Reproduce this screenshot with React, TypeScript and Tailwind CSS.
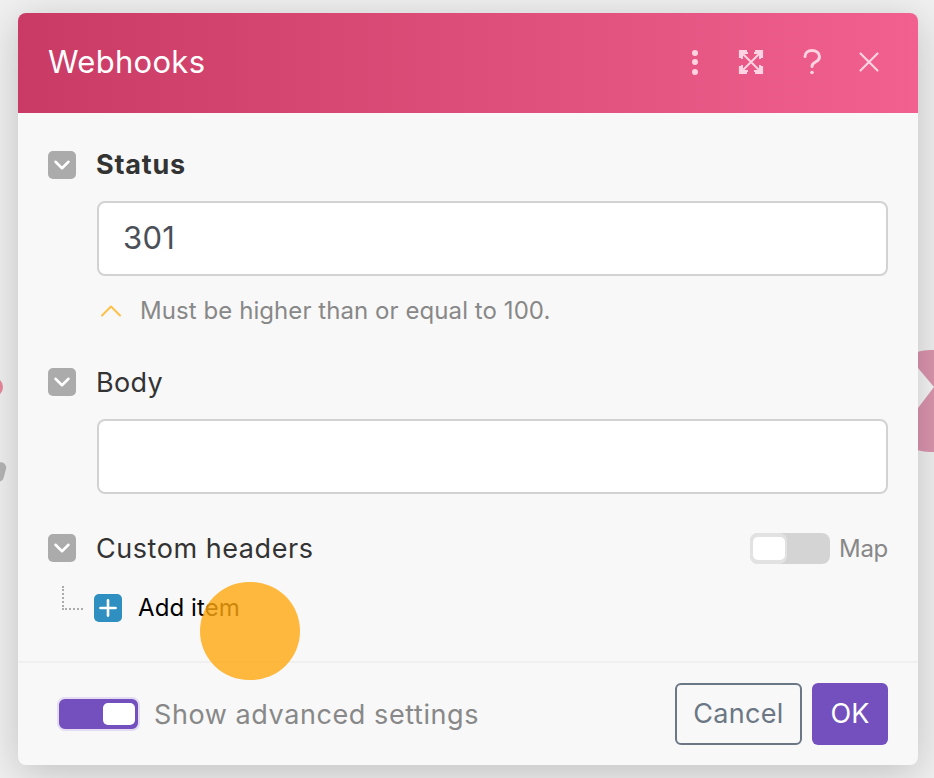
import React from 'react';
import { ChevronDown, ChevronUp, Plus, X } from 'lucide-react';

const Collapse: React.FC = () => (
  <div className="w-7 h-7 shrink-0 rounded-[5px] bg-[#ababab] flex items-center justify-center">
    <ChevronDown size={26} strokeWidth={2.3} className="text-white" />
  </div>
);

const ExpandIcon: React.FC = () => (
  <svg width="26" height="26" viewBox="0 0 26 26" fill="none" stroke="currentColor" strokeWidth="2">
    <path d="M9 2H2v7M17 2h7v7M9 24H2v-7M17 24h7v-7" strokeWidth="2.2" />
    <path d="M4 4l18 18M22 4L4 22" />
    <path d="M4 10V4h6M22 10V4h-6M4 16v6h6M22 16v6h-6" />
  </svg>
);

const HelpIcon: React.FC = () => (
  <svg width="18" height="26" viewBox="0 0 18 26" fill="none" stroke="currentColor" strokeWidth="3" strokeLinecap="round">
    <path d="M2 7.5C2 4 5 1.5 9 1.5s7.5 2.5 7.5 6c0 3-2 4.5-4 5.5-2 1-3.5 2-3.5 4.5" />
    <circle cx="9" cy="23.5" r="1.8" fill="currentColor" stroke="none" />
  </svg>
);

export default function App() {
  return (
    <div className="relative w-[934px] h-[778px] overflow-hidden bg-[#f0f0f0] pt-[13px] pl-[18px] font-['Inter',sans-serif]">
      {/* canvas behind the dialog */}
      <div className="absolute left-[-21px] top-[377px] w-[24px] h-[20px] rounded-full bg-[#e8889c]" />
      <div className="absolute left-[-6px] top-[462px] w-[11px] h-[20px] rounded-full rotate-[15deg] bg-[#b5b5b5]" />
      <div className="absolute left-[880px] top-[350px] w-[110px] h-[102px] rounded-full bg-[#db95ae]" />
      <svg className="absolute left-[918px] top-[368px]" width="16" height="40" viewBox="0 0 16 40">
        <path d="M0 0L16 19L0 40Z" fill="#f6f6f6" />
      </svg>

      <div className="relative w-[900px] h-[752px] rounded-lg overflow-hidden bg-[#f8f8f8] shadow-[0_8px_40px_rgba(0,0,0,0.2)] flex flex-col">
        <div className="h-[100px] shrink-0 bg-gradient-to-r from-[#c93a64] to-[#f1608f] flex items-center pl-[30px] pr-[40px]">
          <span className="text-[31px] leading-none tracking-[0.3px] text-white -mt-[3px]">Webhooks</span>
          <div className="ml-auto flex items-center text-[#ffd3e1] -mt-[2px]">
            <div className="flex flex-col gap-[3.5px] mr-[40px]">
              <div className="w-[6px] h-[6px] rounded-full bg-[#ffd3e1]" />
              <div className="w-[6px] h-[6px] rounded-full bg-[#ffd3e1]" />
              <div className="w-[6px] h-[6px] rounded-full bg-[#ffd3e1]" />
            </div>
            <ExpandIcon />
            <div className="ml-[39px] mr-[39px]">
              <HelpIcon />
            </div>
            <div className="w-[18px] h-[18px] flex items-center justify-center">
              <X size={34} strokeWidth={1.5} className="shrink-0" />
            </div>
          </div>
        </div>

        <div className="flex-1 pl-[30px] pr-[30px] pt-[38px]">
          <div className="flex items-center gap-[20px] h-7">
            <Collapse />
            <span className="text-[27px] leading-7 font-bold tracking-[0.8px] text-[#333333]">Status</span>
          </div>
          <div className="ml-[49px] mt-[22px] h-[75px] rounded-lg border-2 border-[#d2d2d2] bg-white flex items-center px-[24px] text-[31px] tracking-[0.3px] text-[#4b5058]">
            301
          </div>
          <div className="ml-[49px] mt-[20px] flex items-center h-[30px]">
            <div className="w-[28px] flex items-center justify-center">
              <ChevronUp size={36} strokeWidth={1.4} className="text-[#fdc14b] shrink-0" />
            </div>
            <span className="ml-[15px] text-[24px] tracking-[0.07px] text-[#888888]">Must be higher than or equal to 100.</span>
          </div>
          <div className="flex items-center gap-[20px] h-7 mt-[42px]">
            <Collapse />
            <span className="text-[27px] leading-7 tracking-[0.3px] text-[#333333] mt-[1px]">Body</span>
          </div>
          <div className="ml-[49px] mt-[23px] h-[75px] rounded-lg border-2 border-[#d2d2d2] bg-white" />
          <div className="flex items-center gap-[20px] h-7 mt-[40px]">
            <Collapse />
            <span className="text-[27px] leading-7 tracking-[0.55px] text-[#333333] mt-[1px]">Custom headers</span>
            <div className="ml-auto flex items-center gap-[9px]">
              <div className="w-[80px] h-[31px] rounded-lg bg-[#d4d4d4] flex items-center">
                <div className="w-[37px] h-[31px] rounded-lg bg-[#e2e2e2] flex items-center justify-center">
                  <div className="w-[32px] h-[23px] rounded-[5px] bg-white" />
                </div>
              </div>
              <span className="text-[24px] leading-7 tracking-[-0.3px] text-[#888888] mt-[2px]">Map</span>
            </div>
          </div>
          <div className="flex items-start mt-[24px] ml-[14px]">
            <div className="w-[21px] h-[24px] border-l-2 border-b-2 border-dotted border-[#ababab]" />
            <div className="ml-[11px] mt-[7px] flex items-center gap-4">
              <div className="w-7 h-7 rounded-[5px] bg-[#2e8fc0] flex items-center justify-center">
                <Plus size={26} strokeWidth={2.4} className="text-white" />
              </div>
              <span className="text-[24px] leading-7 tracking-[0.1px] text-black mt-[1px]">Add item</span>
            </div>
          </div>
        </div>

        <div className="h-[104px] shrink-0 border-t-2 border-[#f0f0f0] flex items-center pl-[39px] pr-[30px]">
          <div className="w-[83px] h-[34px] rounded-lg bg-[#7350bd] border-2 border-[#e3dcf3] flex items-center justify-end pr-[3px] shadow-[inset_0_0_0_1px_#7350bd]">
            <div className="w-[32px] h-[22px] rounded-[5px] bg-white" />
          </div>
          <span className="ml-[14px] mt-[2px] text-[27px] tracking-[0.58px] text-[#888888]">Show advanced settings</span>
          <button className="ml-auto w-[127px] h-[62px] pt-[1px] rounded-md border-2 border-[#6b7785] text-[27px] tracking-[0.3px] text-[#6b7785]">
            Cancel
          </button>
          <button className="ml-[10px] w-[76px] h-[62px] pt-[1px] rounded-md bg-[#7350bd] text-[27px] text-white">
            OK
          </button>
        </div>

        {/* click marker over the dialog */}
        <div className="absolute left-[182px] top-[569px] w-[100px] h-[98px] rounded-full bg-[#ffa80e]/80" />
      </div>
    </div>
  );
}
